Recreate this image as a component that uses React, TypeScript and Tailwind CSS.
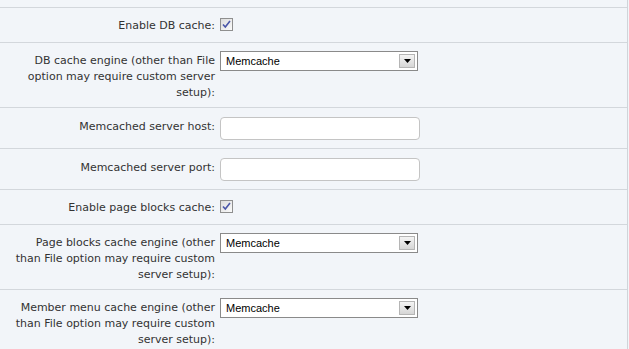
import React from 'react';

const Label: React.FC<{ lines: string[]; pt: string }> = ({ lines, pt }) => (
  <div className={`w-[215px] shrink-0 text-right text-[11px] leading-[16px] text-[#333] ${pt}`}>
    {lines.map((l, i) => (
      <div key={i}>{l}</div>
    ))}
  </div>
);

const Checkbox: React.FC = () => (
  <div className="mt-[2px] w-[13px] h-[13px] border border-[#8f8f8f] bg-gradient-to-br from-[#dcdcdc] to-[#fbfbfb] flex items-center justify-center">
    <svg width="9" height="9" viewBox="0 0 9 9">
      <path d="M1 4.5 L3.3 7 L8 1" fill="none" stroke="#4a56a8" strokeWidth="1.6" />
    </svg>
  </div>
);

const Select: React.FC<{ value: string }> = ({ value }) => (
  <div className="w-[198px] h-[20px] border border-[#8a8a8a] bg-white flex items-center justify-between pl-[5px] pr-[2px]">
    <span className="text-[11px] text-black font-['Liberation_Sans',Arial,sans-serif]">{value}</span>
    <div className="w-[16px] h-[14px] border border-[#b5b5b5] bg-gradient-to-b from-[#f4f4f4] to-[#d6d6d6] flex items-center justify-center">
      <svg width="7" height="4" viewBox="0 0 7 4">
        <path d="M0 0 H7 L3.5 4 Z" fill="#000" />
      </svg>
    </div>
  </div>
);

const TextInput: React.FC = () => (
  <input type="text" className="w-[200px] h-[23px] border border-[#c4c4c4] rounded-[4px] bg-white outline-none" />
);

const CheckRow: React.FC<{ label: string }> = ({ label }) => (
  <div className="flex items-start border-t border-[#d3d7dc] pt-[8px] pb-[8px]">
    <Label lines={[label]} pt="pt-[2px]" />
    <div className="ml-[5px]">
      <Checkbox />
    </div>
  </div>
);

const SelectRow: React.FC<{ lines: string[] }> = ({ lines }) => (
  <div className="flex items-start border-t border-[#d3d7dc] pt-[8px] pb-[6px]">
    <Label lines={lines} pt="pt-[2px]" />
    <div className="ml-[5px]">
      <Select value="Memcache" />
    </div>
  </div>
);

const InputRow: React.FC<{ label: string }> = ({ label }) => (
  <div className="flex items-start border-t border-[#d3d7dc] py-[8px]">
    <Label lines={[label]} pt="pt-[3px]" />
    <div className="ml-[5px]">
      <TextInput />
    </div>
  </div>
);

export default function App() {
  return (
    <div className="w-[629px] h-[349px] overflow-hidden bg-[#f2f5f9] font-['DejaVu_Sans',Verdana,sans-serif]">
      <div className="w-[628px] h-full border-r border-[#d0d4d9]">
        <div className="h-[7px]" />
        <CheckRow label="Enable DB cache:" />
        <SelectRow lines={['DB cache engine (other than File', 'option may require custom server', 'setup):']} />
        <InputRow label="Memcached server host:" />
        <InputRow label="Memcached server port:" />
        <CheckRow label="Enable page blocks cache:" />
        <SelectRow lines={['Page blocks cache engine (other', 'than File option may require custom', 'server setup):']} />
        <SelectRow lines={['Member menu cache engine (other', 'than File option may require custom', 'server setup):']} />
      </div>
    </div>
  );
}
